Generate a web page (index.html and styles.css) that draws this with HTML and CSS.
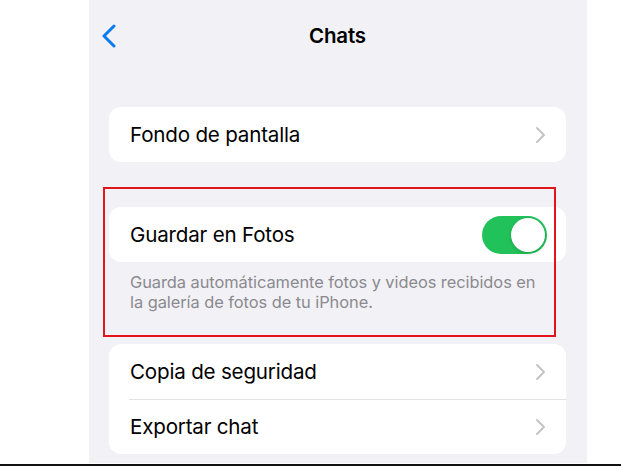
FILE: index.html
```html
<!DOCTYPE html>
<html lang="es">
<head>
<meta charset="utf-8">
<title>Chats</title>
<link rel="stylesheet" href="styles.css">
</head>
<body>
<div class="frame">
  <div class="screen">
    <header class="nav">
      <a class="back" href="#" aria-label="Atrás">
        <svg width="17" height="24" viewBox="0 0 17 24"><path d="M14 2 L4 12 L14 22" fill="none" stroke="#0a7bf0" stroke-width="3" stroke-linecap="round" stroke-linejoin="round"/></svg>
      </a>
      <h1 class="title">Chats</h1>
    </header>

    <section class="group group-first">
      <div class="row">
        <span class="label">Fondo de pantalla</span>
        <svg class="chev" width="11" height="18" viewBox="0 0 11 18"><path d="M2 2 L9 9 L2 16" fill="none" stroke="#c4c4c7" stroke-width="2" stroke-linecap="round" stroke-linejoin="round"/></svg>
      </div>
    </section>

    <div class="highlighted">
      <section class="group">
        <div class="row">
          <span class="label">Guardar en Fotos</span>
          <span class="switch on"><span class="knob"></span></span>
        </div>
      </section>
      <p class="footnote">Guarda automáticamente fotos y videos recibidos en la galería de fotos de tu iPhone.</p>
      <div class="highlight-box"></div>
    </div>

    <section class="group">
      <div class="row">
        <span class="label">Copia de seguridad</span>
        <svg class="chev" width="11" height="18" viewBox="0 0 11 18"><path d="M2 2 L9 9 L2 16" fill="none" stroke="#c4c4c7" stroke-width="2" stroke-linecap="round" stroke-linejoin="round"/></svg>
      </div>
      <div class="row">
        <span class="label">Exportar chat</span>
        <svg class="chev" width="11" height="18" viewBox="0 0 11 18"><path d="M2 2 L9 9 L2 16" fill="none" stroke="#c4c4c7" stroke-width="2" stroke-linecap="round" stroke-linejoin="round"/></svg>
      </div>
    </section>
  </div>
</div>
</body>
</html>
```

FILE: styles.css
```css
* {
  box-sizing: border-box;
}

html, body {
  margin: 0;
  padding: 0;
  background: #ffffff;
}

body {
  font-family: Inter, "Noto Sans", "Liberation Sans", sans-serif;
  color: #000;
  -webkit-font-smoothing: antialiased;
}

.frame {
  width: 621px;
  height: 466px;
  border-bottom: 2px solid #111;
  overflow: hidden;
  display: flex;
  justify-content: flex-start;
}

.screen {
  margin-left: 89px;
  width: 498px;
  height: 463px;
  background: #f2f1f6;
  padding: 0 21px 0 20px;
  overflow: hidden;
}

/* navigation bar */
.nav {
  position: relative;
  height: 70px;
  display: flex;
  align-items: center;
  justify-content: center;
}

.back {
  position: absolute;
  left: -9px;
  top: 24px;
  display: block;
  line-height: 0;
}

.title {
  margin: 0;
  font-size: 20.5px;
  font-weight: 600;
  letter-spacing: -0.2px;
}

/* grouped list */
.group {
  background: #ffffff;
  border-radius: 12px;
  overflow: hidden;
}

.group-first {
  margin-top: 37px;
  margin-bottom: 45px;
}

.row {
  position: relative;
  height: 55px;
  display: flex;
  align-items: center;
  justify-content: space-between;
  padding: 0 20px 0 21px;
}

.row + .row::before {
  content: "";
  position: absolute;
  top: 0;
  left: 20px;
  right: 0;
  height: 1px;
  background: #e3e3e6;
}

.label {
  font-size: 20.6px;
  letter-spacing: -0.2px;
}

.chev {
  display: block;
}

/* switch */
.switch {
  width: 65px;
  height: 38px;
  border-radius: 19px;
  background: #e5e5ea;
  position: relative;
  margin-right: -1px;
}

.switch.on {
  background: #22c25a;
}

.knob {
  position: absolute;
  top: 2px;
  right: 2px;
  width: 34px;
  height: 34px;
  border-radius: 50%;
  background: #ffffff;
  box-shadow: 0 0 0 0.5px rgba(0, 0, 0, 0.08), 0 2px 4px rgba(0, 0, 0, 0.12);
}

.footnote {
  margin: 0;
  padding: 11px 24px 0 21px;
  font-size: 16.4px;
  line-height: 19.5px;
  color: #8a8a8e;
  letter-spacing: -0.05px;
}

/* highlighted setting */
.highlighted {
  position: relative;
  padding-bottom: 32px;
}

.highlight-box {
  position: absolute;
  left: -6px;
  right: 10px;
  top: -20px;
  bottom: 7px;
  border: 2px solid #e2141c;
  pointer-events: none;
}
```
